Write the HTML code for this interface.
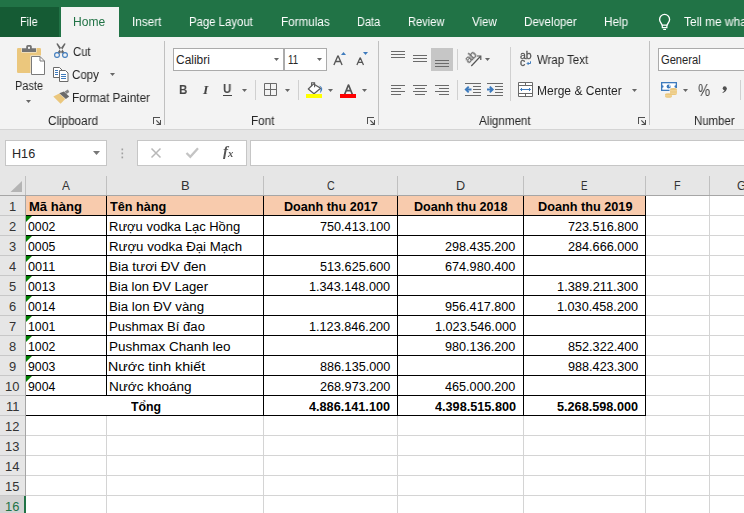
<!DOCTYPE html>
<html><head><meta charset="utf-8"><title>Excel</title>
<style>
html,body{margin:0;padding:0;background:#fff;}
#root{position:relative;width:744px;height:513px;overflow:hidden;font-family:"Liberation Sans",sans-serif;background:#fff;}
.t{position:absolute;white-space:pre;line-height:1;transform-origin:0 0;}
#bg{position:absolute;left:0;top:0;}
.g{will-change:transform;}
.r{position:absolute;white-space:pre;line-height:1;transform-origin:0 0;will-change:transform;color:#555;}

</style></head>
<body>
<div id="root">
<svg id="bg" width="744" height="513" viewBox="0 0 744 513">
<rect x="0" y="0" width="744" height="37" fill="#217346" />
<rect x="0" y="7" width="59" height="30" fill="#155b34" />
<rect x="61" y="7" width="58" height="30" fill="#f3f3f3" />
<rect x="0" y="37" width="744" height="92" fill="#f3f3f3" />
<rect x="0" y="129" width="744" height="1" fill="#d4d4d4" />
<rect x="0" y="130" width="744" height="46" fill="#e6e6e6" />
<rect x="164" y="41" width="1" height="84" fill="#c0c0c0" />
<rect x="378" y="41" width="1" height="84" fill="#c0c0c0" />
<rect x="649" y="41" width="1" height="84" fill="#c0c0c0" />
<rect x="255" y="80" width="1" height="20" fill="#d0d0d0" />
<rect x="298" y="80" width="1" height="20" fill="#d0d0d0" />
<rect x="457" y="49" width="1" height="21" fill="#d0d0d0" />
<rect x="457" y="80" width="1" height="20" fill="#d0d0d0" />
<rect x="510" y="47" width="1" height="54" fill="#d0d0d0" />
<rect x="740" y="80" width="1" height="20" fill="#d0d0d0" />
<rect x="153" y="117" width="7" height="1" fill="#505050" />
<rect x="153" y="117" width="1" height="7" fill="#505050" />
<path d="M156.3 120.3l4.2 4.2" fill="none" stroke="#505050" stroke-width="1.1" />
<rect x="160" y="120" width="1" height="5" fill="#505050" />
<rect x="156.5" y="124" width="4.5" height="1" fill="#505050" />
<rect x="367" y="117" width="7" height="1" fill="#505050" />
<rect x="367" y="117" width="1" height="7" fill="#505050" />
<path d="M370.3 120.3l4.2 4.2" fill="none" stroke="#505050" stroke-width="1.1" />
<rect x="374" y="120" width="1" height="5" fill="#505050" />
<rect x="370.5" y="124" width="4.5" height="1" fill="#505050" />
<rect x="638" y="117" width="7" height="1" fill="#505050" />
<rect x="638" y="117" width="1" height="7" fill="#505050" />
<path d="M641.3 120.3l4.2 4.2" fill="none" stroke="#505050" stroke-width="1.1" />
<rect x="645" y="120" width="1" height="5" fill="#505050" />
<rect x="641.5" y="124" width="4.5" height="1" fill="#505050" />
<rect x="17" y="48" width="24" height="25" rx="1.3" fill="#ebc77d"/>
<rect x="21.5" y="47" width="15" height="5.5" fill="#f3f3f3" />
<path d="M22 52v-3.8h4.2v-1.6a1.6 1.6 0 0 1 1.6-1.6h2.4a1.6 1.6 0 0 1 1.6 1.6v1.6h4.2v3.8z" fill="#737373" />
<rect x="28" y="46.8" width="2" height="2" fill="#f3f3f3" />
<rect x="30.5" y="55.5" width="15" height="20" fill="#f3f3f3" />
<path d="M31.5 56.5h8.5l4.5 4.5v13.5h-13z" fill="#fff" stroke="#7a7a7a" stroke-width="1" />
<path d="M40 56.5v4.5h4.5" fill="none" stroke="#7a7a7a" stroke-width="1" />
<path d="M26 100h5l-2.5 3z" fill="#666" />
<path d="M56.3 43.8l1.3-.6 6.9 9.2-2.6 1.2zM65.7 43.8l-1.3-.6-6.9 9.2 2.6 1.2z" fill="#666" />
<circle cx="57" cy="55" r="2.4" fill="#f3f3f3" stroke="#3e7bbd" stroke-width="1.1"/>
<circle cx="65" cy="55" r="2.4" fill="#f3f3f3" stroke="#3e7bbd" stroke-width="1.1"/>
<path d="M53.5 67.5h6l2.5 2.5v7.5h-8.5z" fill="#fff" stroke="#6a6a6a" stroke-width="1" />
<path d="M59.5 70.5h6l2.5 2.5v8.5h-8.5z" fill="#fff" stroke="#6a6a6a" stroke-width="1" />
<rect x="55" y="70" width="3" height="1" fill="#3e7bbd" />
<rect x="55" y="72" width="3" height="1" fill="#3e7bbd" />
<rect x="55" y="74" width="3" height="1" fill="#3e7bbd" />
<rect x="61" y="74" width="5" height="1" fill="#3e7bbd" />
<rect x="61" y="76" width="5" height="1" fill="#3e7bbd" />
<rect x="61" y="78" width="5" height="1" fill="#3e7bbd" />
<path d="M110 73h5l-2.5 3z" fill="#666" />
<path d="M53.3 96.6l6-3 5.9 5.4-4.6 4.8z" fill="#ebc77d" />
<path d="M59.3 93.3l4.6-1.7 5.3 4.8-3.3 2.7z" fill="#6a6a6a" />
<path d="M64.6 91.6l3.3-2 1.4 2.4-2.7 2.1z" fill="#858585" />
<rect x="173" y="48" width="111" height="23" fill="#ababab" />
<rect x="174" y="49" width="109" height="21" fill="#fff" />
<rect x="284" y="48" width="43" height="23" fill="#ababab" />
<rect x="285" y="49" width="41" height="21" fill="#fff" />
<path d="M274 58h5l-2.5 3z" fill="#666" />
<path d="M317 58h5l-2.5 3z" fill="#666" />
<rect x="658" y="48" width="90" height="23" fill="#ababab" />
<rect x="659" y="49" width="90" height="21" fill="#fff" />
<path d="M333.9 64.9l3.900-9h.4l3.900 9M335.6 61.5h4.8" fill="none" stroke="#555" stroke-width="1.35" stroke-linejoin="round"/>
<path d="M341 55h5l-2.5-3z" fill="#3e7bbd" />
<path d="M356.9 64.9l3.1-7h.4l3.100 7M358.3 62.4h3.8" fill="none" stroke="#555" stroke-width="1.25" stroke-linejoin="round"/>
<path d="M363 52h5l-2.5 3z" fill="#3e7bbd" />
<path d="M264.5 83.5h12v12h-12zM270.5 83.5v12M264.5 89.5h12" fill="none" stroke="#6a6a6a" stroke-width="1" />
<path d="M285 89h5l-2.5 3z" fill="#666" />
<path d="M313.6 83.9l7 4.3-6.6 5.6-5.7-4.8z" fill="#fff" stroke="#5a5a5a" stroke-width="1.2" stroke-linejoin="round"/>
<path d="M311.6 86.2v-3.4h3v4.4" fill="none" stroke="#5a5a5a" stroke-width="1.1" />
<path d="M318.8 85.4c3 .8 4 2.600 3.200 4.800c-.4 1.200-1.100 2.100-2.200 3c.5-1.600 .9-3 .8-4.500l.900-.700z" fill="#3e7bbd" />
<rect x="306" y="94" width="16" height="4" fill="#ffff00" />
<path d="M328 89h5l-2.5 3z" fill="#666" />
<path d="M344.7 94.2l3.6-9h.4l3.600 9M346.200 90.700h4.600" fill="none" stroke="#555" stroke-width="1.7" stroke-linejoin="round"/>
<rect x="340" y="94" width="16" height="4" fill="#ff0000" />
<path d="M362 89h5l-2.5 3z" fill="#666" />
<path d="M242 89h5l-2.5 3z" fill="#666" />
<rect x="223" y="95" width="9" height="1" fill="#444" />
<rect x="391" y="51" width="14" height="1" fill="#6a6a6a" />
<rect x="391" y="54" width="14" height="1" fill="#6a6a6a" />
<rect x="391" y="57" width="14" height="1" fill="#6a6a6a" />
<rect x="413" y="55" width="14" height="1" fill="#6a6a6a" />
<rect x="413" y="58" width="14" height="1" fill="#6a6a6a" />
<rect x="413" y="61" width="14" height="1" fill="#6a6a6a" />
<rect x="431" y="48" width="22" height="23" fill="#c6c6c6" />
<rect x="435" y="60" width="14" height="1" fill="#6a6a6a" />
<rect x="435" y="63" width="14" height="1" fill="#6a6a6a" />
<rect x="435" y="66" width="14" height="1" fill="#6a6a6a" />
<rect x="391" y="85" width="14" height="1" fill="#6a6a6a" />
<rect x="413.0" y="85" width="14" height="1" fill="#6a6a6a" />
<rect x="435" y="85" width="14" height="1" fill="#6a6a6a" />
<rect x="391" y="88" width="10" height="1" fill="#6a6a6a" />
<rect x="415.0" y="88" width="10" height="1" fill="#6a6a6a" />
<rect x="439" y="88" width="10" height="1" fill="#6a6a6a" />
<rect x="391" y="91" width="14" height="1" fill="#6a6a6a" />
<rect x="413.0" y="91" width="14" height="1" fill="#6a6a6a" />
<rect x="435" y="91" width="14" height="1" fill="#6a6a6a" />
<rect x="391" y="94" width="10" height="1" fill="#6a6a6a" />
<rect x="415.0" y="94" width="10" height="1" fill="#6a6a6a" />
<rect x="439" y="94" width="10" height="1" fill="#6a6a6a" />
<path d="M471.3 66l9-9.5" fill="none" stroke="#555" stroke-width="1.2" />
<path d="M476.8 56h4v4" fill="none" stroke="#555" stroke-width="1.2" />
<path d="M485 58h5l-2.5 3z" fill="#666" />
<rect x="465" y="83" width="16" height="1" fill="#6a6a6a" />
<rect x="465" y="95" width="16" height="1" fill="#6a6a6a" />
<rect x="473" y="86" width="8" height="1" fill="#6a6a6a" />
<rect x="473" y="89" width="8" height="1" fill="#6a6a6a" />
<rect x="473" y="92" width="8" height="1" fill="#6a6a6a" />
<path d="M471.5 89.5h-5.500M468.7 86.6l-2.900 2.900 2.900 2.900" fill="none" stroke="#3e7bbd" stroke-width="1.9" />
<rect x="487" y="83" width="16" height="1" fill="#6a6a6a" />
<rect x="487" y="95" width="16" height="1" fill="#6a6a6a" />
<rect x="495" y="86" width="8" height="1" fill="#6a6a6a" />
<rect x="495" y="89" width="8" height="1" fill="#6a6a6a" />
<rect x="495" y="92" width="8" height="1" fill="#6a6a6a" />
<path d="M487 89.5h5.500M489.8 86.6l2.900 2.900-2.900 2.900" fill="none" stroke="#3e7bbd" stroke-width="1.9" />
<path d="M530.5 61.300v2.200h-3.200M528.600 62l-1.500 1.500 1.500 1.500" fill="none" stroke="#3e7bbd" stroke-width="1" />
<path d="M518.5 82.500h14v14h-14z" fill="#fff" stroke="#6a6a6a" stroke-width="1" />
<path d="M518.5 85.500h14M518.5 93.500h14M525.5 82.500v3M525.5 93.500v3" fill="none" stroke="#6a6a6a" stroke-width="1" />
<path d="M520.500 89.500h10M522 88l-1.500 1.500 1.500 1.500M529 88l1.500 1.500-1.500 1.500" fill="none" stroke="#3e7bbd" stroke-width="1" />
<path d="M632 89h5l-2.5 3z" fill="#666" />
<rect x="661" y="82" width="16" height="9" fill="#3e7bbd" />
<rect x="662.3" y="83.3" width="13.4" height="6.4" fill="#fff" />
<circle cx="668.7" cy="86.5" r="2.1" fill="#3e7bbd"/>
<rect x="669" y="85.3" width="1.6" height="1.3" fill="#fff" />
<circle cx="662.3" cy="86.5" r="1.2" fill="#3e7bbd"/>
<circle cx="675.7" cy="86.5" r="1.2" fill="#3e7bbd"/>
<rect x="669.5" y="88" width="8" height="7" fill="#f3f3f3" />
<rect x="664.8" y="92.6" width="7.4" height="5.8" fill="#f3f3f3" />
<ellipse cx="673.5" cy="89.3" rx="3.4" ry="1.25" fill="#ebc77d"/>
<ellipse cx="673.5" cy="91.5" rx="3.4" ry="1.25" fill="#ebc77d"/>
<ellipse cx="673.5" cy="93.7" rx="3.4" ry="1.25" fill="#ebc77d"/>
<rect x="670.1" y="89.3" width="6.8" height="4.4" fill="#ebc77d" />
<rect x="670.1" y="90.6" width="6.8" height="0.6" fill="#f6e3b8" />
<rect x="670.1" y="92.8" width="6.8" height="0.6" fill="#f6e3b8" />
<ellipse cx="668.5" cy="94.4" rx="3.4" ry="1.25" fill="#ebc77d"/>
<ellipse cx="668.5" cy="96.6" rx="3.4" ry="1.25" fill="#ebc77d"/>
<rect x="665.1" y="94.4" width="6.8" height="2.2" fill="#ebc77d" />
<rect x="665.1" y="95.6" width="6.8" height="0.6" fill="#f6e3b8" />
<path d="M683 89h5l-2.5 3z" fill="#666" />
<circle cx="724.7" cy="88.2" r="1.95" fill="#505050"/>
<path d="M726.6 88c.3 2.300-.9 3.900-3.700 5l-.5-.8c1.500-.8 2.200-1.700 2.200-3z" fill="#505050" />
<path d="M664.600 14.400a5 5 0 0 1 5 5c0 2.300-1.700 3.500-2.500 5.700h-5c-.8-2.200-2.500-3.400-2.500-5.700a5 5 0 0 1 5-5z" fill="none" stroke="#fff" stroke-width="1.35" />
<path d="M662.300 25.100v2.500h4.600v-2.500" fill="none" stroke="#fff" stroke-width="1.2" />
<rect x="663.2" y="28.9" width="2.8" height="1.1" fill="#fff" />
<rect x="5" y="140" width="102" height="26" fill="#c6c6c6" />
<rect x="6" y="141" width="100" height="24" fill="#fff" />
<path d="M93 151h7l-3.5 4z" fill="#777" />
<rect x="121.5" y="148.5" width="1.6" height="1.8" fill="#a0a0a0" />
<rect x="121.5" y="152.5" width="1.6" height="1.8" fill="#a0a0a0" />
<rect x="121.5" y="156.5" width="1.6" height="1.8" fill="#a0a0a0" />
<rect x="137" y="140" width="110" height="26" fill="#c6c6c6" />
<rect x="138" y="141" width="108" height="24" fill="#fff" />
<rect x="250" y="140" width="500" height="26" fill="#c6c6c6" />
<rect x="251" y="141" width="500" height="24" fill="#fff" />
<path d="M151.5 148.5l9 9M160.5 148.5l-9 9" fill="none" stroke="#b8b8b8" stroke-width="1.5" />
<path d="M186.5 153l3.8 3.8 7.7-8.6" fill="none" stroke="#c4c4c4" stroke-width="2.3" />
<rect x="0" y="176" width="744" height="20" fill="#e6e6e6" />
<rect x="0" y="196" width="26" height="320" fill="#e6e6e6" />
<rect x="0" y="496" width="26" height="20" fill="#d2d2d2" />
<rect x="26" y="196" width="718" height="320" fill="#fff" />
<path d="M22 181v11h-11.5z" fill="#b4b4b4" />
<rect x="26" y="196" width="620" height="20" fill="#f8cbad" />
<rect x="25" y="196" width="1" height="320" fill="#d4d4d4" />
<rect x="106" y="196" width="1" height="320" fill="#d4d4d4" />
<rect x="263" y="196" width="1" height="320" fill="#d4d4d4" />
<rect x="397" y="196" width="1" height="320" fill="#d4d4d4" />
<rect x="523" y="196" width="1" height="320" fill="#d4d4d4" />
<rect x="645" y="196" width="1" height="320" fill="#d4d4d4" />
<rect x="709" y="196" width="1" height="320" fill="#d4d4d4" />
<rect x="26" y="215" width="718" height="1" fill="#d4d4d4" />
<rect x="26" y="235" width="718" height="1" fill="#d4d4d4" />
<rect x="26" y="255" width="718" height="1" fill="#d4d4d4" />
<rect x="26" y="275" width="718" height="1" fill="#d4d4d4" />
<rect x="26" y="295" width="718" height="1" fill="#d4d4d4" />
<rect x="26" y="315" width="718" height="1" fill="#d4d4d4" />
<rect x="26" y="335" width="718" height="1" fill="#d4d4d4" />
<rect x="26" y="355" width="718" height="1" fill="#d4d4d4" />
<rect x="26" y="375" width="718" height="1" fill="#d4d4d4" />
<rect x="26" y="395" width="718" height="1" fill="#d4d4d4" />
<rect x="26" y="415" width="718" height="1" fill="#d4d4d4" />
<rect x="26" y="435" width="718" height="1" fill="#d4d4d4" />
<rect x="26" y="455" width="718" height="1" fill="#d4d4d4" />
<rect x="26" y="475" width="718" height="1" fill="#d4d4d4" />
<rect x="26" y="495" width="718" height="1" fill="#d4d4d4" />
<rect x="26" y="515" width="718" height="1" fill="#d4d4d4" />
<rect x="25" y="176" width="1" height="20" fill="#c0c0c0" />
<rect x="106" y="176" width="1" height="20" fill="#c0c0c0" />
<rect x="263" y="176" width="1" height="20" fill="#c0c0c0" />
<rect x="397" y="176" width="1" height="20" fill="#c0c0c0" />
<rect x="523" y="176" width="1" height="20" fill="#c0c0c0" />
<rect x="645" y="176" width="1" height="20" fill="#c0c0c0" />
<rect x="709" y="176" width="1" height="20" fill="#c0c0c0" />
<rect x="0" y="215" width="25" height="1" fill="#c8c8c8" />
<rect x="0" y="235" width="25" height="1" fill="#c8c8c8" />
<rect x="0" y="255" width="25" height="1" fill="#c8c8c8" />
<rect x="0" y="275" width="25" height="1" fill="#c8c8c8" />
<rect x="0" y="295" width="25" height="1" fill="#c8c8c8" />
<rect x="0" y="315" width="25" height="1" fill="#c8c8c8" />
<rect x="0" y="335" width="25" height="1" fill="#c8c8c8" />
<rect x="0" y="355" width="25" height="1" fill="#c8c8c8" />
<rect x="0" y="375" width="25" height="1" fill="#c8c8c8" />
<rect x="0" y="395" width="25" height="1" fill="#c8c8c8" />
<rect x="0" y="415" width="25" height="1" fill="#c8c8c8" />
<rect x="0" y="435" width="25" height="1" fill="#c8c8c8" />
<rect x="0" y="455" width="25" height="1" fill="#c8c8c8" />
<rect x="0" y="475" width="25" height="1" fill="#c8c8c8" />
<rect x="0" y="495" width="25" height="1" fill="#c8c8c8" />
<rect x="0" y="515" width="25" height="1" fill="#c8c8c8" />
<rect x="0" y="195" width="744" height="1" fill="#a6a6a6" />
<rect x="25" y="196" width="1" height="320" fill="#a6a6a6" />
<rect x="24" y="496" width="2" height="20" fill="#217346" />
<rect x="106" y="396" width="1" height="19" fill="#fff" />
<rect x="26" y="215" width="620" height="1" fill="#000" />
<rect x="26" y="235" width="620" height="1" fill="#000" />
<rect x="26" y="255" width="620" height="1" fill="#000" />
<rect x="26" y="275" width="620" height="1" fill="#000" />
<rect x="26" y="295" width="620" height="1" fill="#000" />
<rect x="26" y="315" width="620" height="1" fill="#000" />
<rect x="26" y="335" width="620" height="1" fill="#000" />
<rect x="26" y="355" width="620" height="1" fill="#000" />
<rect x="26" y="375" width="620" height="1" fill="#000" />
<rect x="26" y="395" width="620" height="1" fill="#000" />
<rect x="26" y="415" width="620" height="1" fill="#000" />
<rect x="263" y="196" width="1" height="220" fill="#000" />
<rect x="397" y="196" width="1" height="220" fill="#000" />
<rect x="523" y="196" width="1" height="220" fill="#000" />
<rect x="645" y="196" width="1" height="220" fill="#000" />
<rect x="106" y="196" width="1" height="200" fill="#000" />
<path d="M26 216h6l-6 6z" fill="#008000" />
<path d="M26 236h6l-6 6z" fill="#008000" />
<path d="M26 256h6l-6 6z" fill="#008000" />
<path d="M26 276h6l-6 6z" fill="#008000" />
<path d="M26 296h6l-6 6z" fill="#008000" />
<path d="M26 316h6l-6 6z" fill="#008000" />
<path d="M26 336h6l-6 6z" fill="#008000" />
<path d="M26 356h6l-6 6z" fill="#008000" />
<path d="M26 376h6l-6 6z" fill="#008000" />
</svg>
<span class="r" style="left:468.5px;top:64.2px;font-size:11px;transform:rotate(-45deg) translateY(-9.3px);-webkit-text-stroke:0.25px #555;">ab</span>
<span class="r" style="left:519.6px;top:49.7px;font-size:10.5px;-webkit-text-stroke:0.3px #555;">ab</span>
<span class="r" style="left:519.6px;top:56.7px;font-size:10.5px;-webkit-text-stroke:0.3px #555;">c</span>
<span class="r" style="left:222.5px;top:143.9px;font-size:15px;font-family:'Liberation Serif',serif;font-style:italic;font-weight:bold;">f</span>
<span class="r" style="left:228px;top:148.7px;font-size:10.5px;font-family:'Liberation Serif',serif;font-style:italic;font-weight:bold;">x</span>

<span class="t g" style="left:20.10px;top:15.84px;"><span class="t" style="left:0;top:0;font-size:12px;color:#fff;transform:scaleX(0.9104);">File</span></span>
<span class="t g" style="left:73.30px;top:15.84px;"><span class="t" style="left:0;top:0;font-size:12px;color:#217346;transform:scaleX(1.0051);">Home</span></span>
<span class="t g" style="left:132.32px;top:15.84px;"><span class="t" style="left:0;top:0;font-size:12px;color:#fff;transform:scaleX(0.9772);">Insert</span></span>
<span class="t g" style="left:189.30px;top:15.84px;"><span class="t" style="left:0;top:0;font-size:12px;color:#fff;transform:scaleX(0.9463);">Page Layout</span></span>
<span class="t g" style="left:281.30px;top:15.84px;"><span class="t" style="left:0;top:0;font-size:12px;color:#fff;transform:scaleX(0.9738);">Formulas</span></span>
<span class="t g" style="left:357.30px;top:15.84px;"><span class="t" style="left:0;top:0;font-size:12px;color:#fff;transform:scaleX(0.9114);">Data</span></span>
<span class="t g" style="left:408.30px;top:15.84px;"><span class="t" style="left:0;top:0;font-size:12px;color:#fff;transform:scaleX(0.9249);">Review</span></span>
<span class="t g" style="left:472.00px;top:15.84px;"><span class="t" style="left:0;top:0;font-size:12px;color:#fff;transform:scaleX(0.9569);">View</span></span>
<span class="t g" style="left:524.30px;top:15.84px;"><span class="t" style="left:0;top:0;font-size:12px;color:#fff;transform:scaleX(0.9634);">Developer</span></span>
<span class="t g" style="left:604.30px;top:15.84px;"><span class="t" style="left:0;top:0;font-size:12px;color:#fff;transform:scaleX(0.9758);">Help</span></span>
<span class="t g" style="left:684.20px;top:15.84px;"><span class="t" style="left:0;top:0;font-size:12px;color:#fff;transform:scaleX(0.9906);">Tell me what you want</span></span>
<span class="t g" style="left:15.00px;top:80.14px;"><span class="t" style="left:0;top:0;font-size:12px;color:#262626;transform:scaleX(0.9126);">Paste</span></span>
<span class="t g" style="left:72.50px;top:46.14px;"><span class="t" style="left:0;top:0;font-size:12px;color:#262626;transform:scaleX(0.9462);">Cut</span></span>
<span class="t g" style="left:72.30px;top:69.14px;"><span class="t" style="left:0;top:0;font-size:12px;color:#262626;transform:scaleX(0.9602);">Copy</span></span>
<span class="t g" style="left:72.00px;top:92.14px;"><span class="t" style="left:0;top:0;font-size:12px;color:#262626;transform:scaleX(0.9828);">Format Painter</span></span>
<span class="t g" style="left:48.30px;top:115.14px;"><span class="t" style="left:0;top:0;font-size:12px;color:#262626;transform:scaleX(0.9726);">Clipboard</span></span>
<span class="t" style="left:176.00px;top:54.04px;font-size:12px;color:#262626;transform:scaleX(0.9957);">Calibri</span>
<span class="t" style="left:288.00px;top:53.74px;font-size:12px;color:#262626;transform:scaleX(0.8057);">11</span>
<span class="t g" style="left:251.00px;top:115.14px;"><span class="t" style="left:0;top:0;font-size:12px;color:#262626;transform:scaleX(0.9725);">Font</span></span>
<span class="t g" style="left:537.00px;top:53.74px;"><span class="t" style="left:0;top:0;font-size:12px;color:#262626;transform:scaleX(0.9548);">Wrap Text</span></span>
<span class="t g" style="left:537.40px;top:85.14px;"><span class="t" style="left:0;top:0;font-size:12px;color:#262626;transform:scaleX(1.0011);">Merge &amp; Center</span></span>
<span class="t g" style="left:479.30px;top:115.14px;"><span class="t" style="left:0;top:0;font-size:12px;color:#262626;transform:scaleX(0.9680);">Alignment</span></span>
<span class="t" style="left:661.00px;top:53.84px;font-size:12px;color:#262626;transform:scaleX(0.9280);">General</span>
<span class="t g" style="left:694.00px;top:115.14px;"><span class="t" style="left:0;top:0;font-size:12px;color:#262626;transform:scaleX(0.9512);">Number</span></span>
<span class="t g" style="left:178.80px;top:83.00px;"><span class="t" style="left:0;top:0;font-size:13px;color:#444;transform:scaleX(0.8889);font-weight:bold;">B</span></span>
<span class="t g" style="left:202.66px;top:83.11px;"><span class="t" style="left:0;top:0;font-size:13px;color:#444;transform:scaleX(1.0571);font-weight:bold;font-style:italic;font-family:'Liberation Serif',serif;">I</span></span>
<span class="t g" style="left:223.40px;top:83.42px;"><span class="t" style="left:0;top:0;font-size:12.5px;color:#444;transform:scaleX(0.9222);font-weight:bold;">U</span></span>
<span class="t g" style="left:697.50px;top:82.43px;"><span class="t" style="left:0;top:0;font-size:16.5px;color:#444;transform:scaleX(0.8267);">%</span></span>
<span class="t" style="left:11.59px;top:147.62px;font-size:12.5px;color:#262626;transform:scaleX(1.0101);">H16</span>
<span class="t" style="left:62.40px;top:178.60px;font-size:13px;color:#333;transform:scaleX(0.9111);">A</span>
<span class="t" style="left:181.00px;top:178.60px;font-size:13px;color:#333;transform:scaleX(1.0000);">B</span>
<span class="t" style="left:327.30px;top:178.60px;font-size:13px;color:#333;transform:scaleX(0.8222);">C</span>
<span class="t" style="left:456.12px;top:178.60px;font-size:13px;color:#333;transform:scaleX(0.9750);">D</span>
<span class="t" style="left:581.25px;top:178.60px;font-size:13px;color:#333;transform:scaleX(0.7500);">E</span>
<span class="t" style="left:674.27px;top:178.60px;font-size:13px;color:#333;transform:scaleX(0.8286);">F</span>
<span class="t" style="left:737.00px;top:178.60px;font-size:13px;color:#333;transform:scaleX(0.9000);">G</span>
<span class="t" style="left:9.01px;top:201.04px;font-size:12px;color:#333;transform:scaleX(1.0750);">1</span>
<span class="t" style="left:9.01px;top:221.04px;font-size:12px;color:#333;transform:scaleX(1.0750);">2</span>
<span class="t" style="left:9.01px;top:241.04px;font-size:12px;color:#333;transform:scaleX(1.0750);">3</span>
<span class="t" style="left:9.01px;top:261.04px;font-size:12px;color:#333;transform:scaleX(1.0750);">4</span>
<span class="t" style="left:9.01px;top:281.04px;font-size:12px;color:#333;transform:scaleX(1.0750);">5</span>
<span class="t" style="left:9.01px;top:301.04px;font-size:12px;color:#333;transform:scaleX(1.0750);">6</span>
<span class="t" style="left:9.01px;top:321.04px;font-size:12px;color:#333;transform:scaleX(1.0750);">7</span>
<span class="t" style="left:9.01px;top:341.04px;font-size:12px;color:#333;transform:scaleX(1.0750);">8</span>
<span class="t" style="left:9.01px;top:361.04px;font-size:12px;color:#333;transform:scaleX(1.0750);">9</span>
<span class="t" style="left:5.43px;top:381.04px;font-size:12px;color:#333;transform:scaleX(1.0750);">10</span>
<span class="t" style="left:5.90px;top:401.04px;font-size:12px;color:#333;transform:scaleX(1.0750);">11</span>
<span class="t" style="left:5.43px;top:421.04px;font-size:12px;color:#333;transform:scaleX(1.0750);">12</span>
<span class="t" style="left:5.43px;top:441.04px;font-size:12px;color:#333;transform:scaleX(1.0750);">13</span>
<span class="t" style="left:5.43px;top:461.04px;font-size:12px;color:#333;transform:scaleX(1.0750);">14</span>
<span class="t" style="left:5.43px;top:481.04px;font-size:12px;color:#333;transform:scaleX(1.0750);">15</span>
<span class="t" style="left:5.43px;top:501.04px;font-size:12px;color:#217346;transform:scaleX(1.0750);">16</span>
<span class="t" style="left:28.80px;top:200.72px;font-size:12.5px;color:#000;transform:scaleX(1.0427);font-weight:bold;">Mã hàng</span>
<span class="t" style="left:109.60px;top:200.72px;font-size:12.5px;color:#000;transform:scaleX(1.0106);font-weight:bold;">Tên hàng</span>
<span class="t" style="left:283.70px;top:200.72px;font-size:12.5px;color:#000;transform:scaleX(1.0073);font-weight:bold;">Doanh thu 2017</span>
<span class="t" style="left:413.70px;top:200.72px;font-size:12.5px;color:#000;transform:scaleX(1.0051);font-weight:bold;">Doanh thu 2018</span>
<span class="t" style="left:537.50px;top:200.72px;font-size:12.5px;color:#000;transform:scaleX(1.0148);font-weight:bold;">Doanh thu 2019</span>
<span class="t" style="left:28.40px;top:220.72px;font-size:12.5px;color:#000;transform:scaleX(0.9801);">0002</span>
<span class="t" style="left:28.40px;top:240.72px;font-size:12.5px;color:#000;transform:scaleX(0.9801);">0005</span>
<span class="t" style="left:28.40px;top:260.72px;font-size:12.5px;color:#000;transform:scaleX(1.0138);">0011</span>
<span class="t" style="left:28.40px;top:280.72px;font-size:12.5px;color:#000;transform:scaleX(0.9801);">0013</span>
<span class="t" style="left:28.40px;top:300.72px;font-size:12.5px;color:#000;transform:scaleX(0.9801);">0014</span>
<span class="t" style="left:28.40px;top:320.72px;font-size:12.5px;color:#000;transform:scaleX(0.9801);">1001</span>
<span class="t" style="left:28.40px;top:340.72px;font-size:12.5px;color:#000;transform:scaleX(0.9801);">1002</span>
<span class="t" style="left:28.40px;top:360.72px;font-size:12.5px;color:#000;transform:scaleX(0.9801);">9003</span>
<span class="t" style="left:28.40px;top:380.72px;font-size:12.5px;color:#000;transform:scaleX(0.9801);">9004</span>
<span class="t" style="left:108.56px;top:220.72px;font-size:12.5px;color:#000;transform:scaleX(1.0390);">Rượu vodka Lạc Hồng</span>
<span class="t" style="left:108.54px;top:240.72px;font-size:12.5px;color:#000;transform:scaleX(1.0594);">Rượu vodka Đại Mạch</span>
<span class="t" style="left:108.52px;top:260.72px;font-size:12.5px;color:#000;transform:scaleX(1.0839);">Bia tươi ĐV đen</span>
<span class="t" style="left:108.55px;top:280.72px;font-size:12.5px;color:#000;transform:scaleX(1.0478);">Bia lon ĐV Lager</span>
<span class="t" style="left:108.54px;top:300.72px;font-size:12.5px;color:#000;transform:scaleX(1.0611);">Bia lon ĐV vàng</span>
<span class="t" style="left:108.55px;top:320.72px;font-size:12.5px;color:#000;transform:scaleX(1.0456);">Pushmax Bí đao</span>
<span class="t" style="left:108.52px;top:340.72px;font-size:12.5px;color:#000;transform:scaleX(1.0787);">Pushmax Chanh leo</span>
<span class="t" style="left:108.46px;top:360.72px;font-size:12.5px;color:#000;transform:scaleX(1.1382);">Nước tinh khiết</span>
<span class="t" style="left:108.52px;top:380.72px;font-size:12.5px;color:#000;transform:scaleX(1.0826);">Nước khoáng</span>
<span class="t" style="left:130.50px;top:400.72px;font-size:12.5px;color:#000;transform:scaleX(0.9864);font-weight:bold;">Tổng</span>
<span class="t" style="left:319.61px;top:220.72px;font-size:12.5px;color:#000;transform:scaleX(1.0119);">750.413.100</span>
<span class="t" style="left:319.61px;top:260.72px;font-size:12.5px;color:#000;transform:scaleX(1.0119);">513.625.600</span>
<span class="t" style="left:308.92px;top:280.72px;font-size:12.5px;color:#000;transform:scaleX(1.0137);">1.343.148.000</span>
<span class="t" style="left:308.92px;top:320.72px;font-size:12.5px;color:#000;transform:scaleX(1.0137);">1.123.846.200</span>
<span class="t" style="left:319.61px;top:360.72px;font-size:12.5px;color:#000;transform:scaleX(1.0119);">886.135.000</span>
<span class="t" style="left:319.61px;top:380.72px;font-size:12.5px;color:#000;transform:scaleX(1.0119);">268.973.200</span>
<span class="t" style="left:445.31px;top:240.72px;font-size:12.5px;color:#000;transform:scaleX(1.0119);">298.435.200</span>
<span class="t" style="left:445.31px;top:260.72px;font-size:12.5px;color:#000;transform:scaleX(1.0119);">674.980.400</span>
<span class="t" style="left:445.31px;top:300.72px;font-size:12.5px;color:#000;transform:scaleX(1.0119);">956.417.800</span>
<span class="t" style="left:434.62px;top:320.72px;font-size:12.5px;color:#000;transform:scaleX(1.0137);">1.023.546.000</span>
<span class="t" style="left:445.31px;top:340.72px;font-size:12.5px;color:#000;transform:scaleX(1.0119);">980.136.200</span>
<span class="t" style="left:445.31px;top:380.72px;font-size:12.5px;color:#000;transform:scaleX(1.0119);">465.000.200</span>
<span class="t" style="left:567.61px;top:220.72px;font-size:12.5px;color:#000;transform:scaleX(1.0119);">723.516.800</span>
<span class="t" style="left:567.61px;top:240.72px;font-size:12.5px;color:#000;transform:scaleX(1.0119);">284.666.000</span>
<span class="t" style="left:556.92px;top:280.72px;font-size:12.5px;color:#000;transform:scaleX(1.0256);">1.389.211.300</span>
<span class="t" style="left:556.92px;top:300.72px;font-size:12.5px;color:#000;transform:scaleX(1.0137);">1.030.458.200</span>
<span class="t" style="left:567.61px;top:340.72px;font-size:12.5px;color:#000;transform:scaleX(1.0119);">852.322.400</span>
<span class="t" style="left:567.61px;top:360.72px;font-size:12.5px;color:#000;transform:scaleX(1.0119);">988.423.300</span>
<span class="t" style="left:308.92px;top:400.72px;font-size:12.5px;color:#000;transform:scaleX(1.0137);font-weight:bold;">4.886.141.100</span>
<span class="t" style="left:434.62px;top:400.72px;font-size:12.5px;color:#000;transform:scaleX(1.0137);font-weight:bold;">4.398.515.800</span>
<span class="t" style="left:556.92px;top:400.72px;font-size:12.5px;color:#000;transform:scaleX(1.0137);font-weight:bold;">5.268.598.000</span>
</div>
</body></html>
